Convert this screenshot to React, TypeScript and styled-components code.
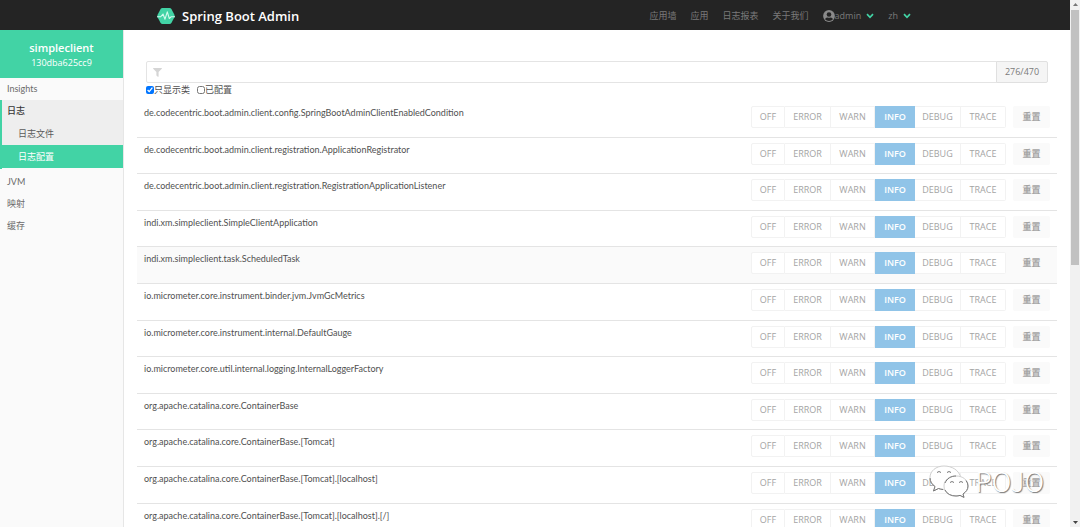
import React, { useState } from 'react';
import styled, { createGlobalStyle } from 'styled-components';

const GlobalStyle = createGlobalStyle`
  * { box-sizing: border-box; }
  html, body, #root { height: 100%; margin: 0; }
  body {
    overflow: hidden;
    background: #fff;
    color: #505050;
    font-family: Lato, "Noto Sans CJK SC", sans-serif;
    font-size: 9px;
    line-height: 14px;
  }
  a { color: inherit; text-decoration: none; }
  ul { list-style: none; margin: 0; padding: 0; }
  button, input { font: inherit; color: inherit; margin: 0; }
`;

const Shell = styled.div`
  display: flex;
  height: 100vh;
`;

const Page = styled.div`
  position: relative;
  flex: 1;
  min-width: 0;
  display: flex;
  flex-direction: column;
  overflow: hidden;
`;

const Header = styled.header`
  flex: none;
  height: 30px;
  background: #242424;
  font-family: "Open Sans", "Noto Sans CJK SC", sans-serif;
`;

const HeaderInner = styled.div`
  display: flex;
  align-items: center;
  justify-content: space-between;
  height: 100%;
  max-width: 756px;
  margin: 0 auto;
`;

const Brand = styled.a`
  display: flex;
  align-items: center;
  gap: 7px;
  padding-top: 2px;
  color: #fff;
  font-size: 13px;
  font-weight: 600;
`;

const Nav = styled.nav`
  display: flex;
  align-items: center;
  gap: 14px;
  padding: 2px 2px 0 0;
  color: #7a7a7a;
`;

const NavLink = styled.a`
  display: flex;
  align-items: center;
`;

const MenuButton = styled.button`
  display: flex;
  align-items: center;
  padding: 0;
  border: 0;
  background: none;
  svg:last-child { margin-left: 5px; }
`;

const Body = styled.div`
  flex: 1;
  display: flex;
  min-height: 0;
`;

const Sidebar = styled.aside`
  flex: none;
  width: 124px;
  background: #fafafa;
  border-right: 1px solid #e6e6e6;
`;

const Instance = styled.a`
  display: flex;
  flex-direction: column;
  align-items: center;
  height: 48px;
  padding-top: 10px;
  background: #42d3a5;
  color: #fff;
  font-family: "Open Sans", sans-serif;
  strong { font-size: 11px; font-weight: 600; line-height: 16px; }
`;

const SideLink = styled.a<{ $strong?: boolean }>`
  display: flex;
  align-items: center;
  height: 22px;
  padding-left: 7px;
  color: ${(p) => (p.$strong ? '#363636' : '#6a6a6a')};
  font-weight: ${(p) => (p.$strong ? 500 : 400)};
`;

const Group = styled.li`
  margin-bottom: 2px;
  padding-bottom: 1px;
  border-left: 2px solid #42d3a5;
  background: linear-gradient(#eee, #eee) no-repeat 0 0 / 100% 68px;
  ${SideLink} { padding-left: 5px; }
`;

const SubLink = styled.a<{ $active?: boolean }>`
  display: flex;
  align-items: center;
  height: 23px;
  padding-left: 16px;
  background: ${(p) => (p.$active ? '#42d3a5' : 'transparent')};
  color: ${(p) => (p.$active ? '#fff' : '#5a5a5a')};
`;

const Main = styled.main`
  flex: 1;
  min-width: 0;
  padding: 31px 13px 0;
`;

const Filters = styled.div`
  padding: 0 9px;
`;

const SearchRow = styled.div`
  display: flex;
  height: 22px;
`;

const SearchBox = styled.label`
  flex: 1;
  display: flex;
  align-items: center;
  padding-left: 6px;
  gap: 6px;
  border: 1px solid #e4e4e4;
  border-radius: 2px 0 0 2px;
  input { flex: 1; min-width: 0; border: 0; outline: 0; background: none; padding: 0; }
`;

const Count = styled.output`
  width: 52px;
  margin-left: -1px;
  border: 1px solid #e0e0e0;
  border-radius: 0 2px 2px 0;
  background: #f5f5f5;
  color: #7a7a7a;
  font-family: "Open Sans", sans-serif;
  line-height: 20px;
  text-align: center;
`;

const Checks = styled.div`
  display: flex;
  gap: 7px;
  height: 14px;
`;

const Check = styled.label`
  display: flex;
  align-items: center;
  input { width: 8px; height: 8px; }
`;

const LoggerTable = styled.table`
  width: 100%;
  margin-top: 4px;
  border-collapse: separate;
  border-spacing: 0;
`;

const Row = styled.tr<{ $hovered?: boolean }>`
  height: 37px;
  background: ${(p) => (p.$hovered ? '#fafafa' : '#fff')};
  &:nth-child(5n + 2), &:nth-child(5n + 4) { height: 36px; }
  th, td {
    padding: 5px 7px 0;
    border-bottom: 1px solid #e4e4e4;
    vertical-align: top;
    text-align: left;
    font-weight: 400;
  }
`;

const Controls = styled.div`
  display: flex;
  justify-content: flex-end;
  gap: 7px;
`;

const Levels = styled.div`
  display: flex;
`;

const Level = styled.button<{ $active?: boolean; $width: number }>`
  width: ${(p) => p.$width}px;
  height: 22px;
  padding: 0;
  border: 1px solid ${(p) => (p.$active ? '#90c4e8' : '#f2f2f2')};
  border-left-width: ${(p) => (p.$active ? 1 : 0)}px;
  background: ${(p) => (p.$active ? '#90c4e8' : '#fff')};
  color: ${(p) => (p.$active ? '#fff' : '#a4a4a4')};
  font-family: "Open Sans", sans-serif;
  font-weight: ${(p) => (p.$active ? 600 : 400)};
  &:first-child { border-left-width: 1px; border-radius: 2px 0 0 2px; }
  &:last-child { border-radius: 0 2px 2px 0; }
`;

const Reset = styled.button`
  width: 37px;
  height: 22px;
  padding: 0;
  border: 0;
  border-radius: 2px;
  background: #fafafa;
  color: #a4a4a4;
  font-weight: 700;
`;

const ScrollTrack = styled.div`
  flex: none;
  display: flex;
  flex-direction: column;
  align-items: center;
  justify-content: space-between;
  width: 10px;
  padding: 3px 1px;
  background: #f1f1f1;
`;

const ScrollThumb = styled.div`
  width: 100%;
  height: 49%;
  margin: 4px 0 auto;
  background: #c1c1c1;
`;

const Watermark = styled.div`
  position: absolute;
  right: 26px;
  bottom: 29px;
  display: flex;
  align-items: center;
  gap: 6px;
  color: #fff;
  font-family: "Noto Sans CJK SC", sans-serif;
  font-size: 27px;
  font-weight: 300;
  line-height: 34px;
  text-shadow: 1px 1px 1px #777;
  pointer-events: none;
`;

const Bubble = styled.path`
  fill: #fff;
  stroke: #d0d0d0;
  stroke-width: 1;
`;

const BubbleShade = styled.path`
  fill: none;
  stroke: #777;
  stroke-width: 1;
`;

const LEVELS: [string, number][] = [
  ['OFF', 34], ['ERROR', 46], ['WARN', 44], ['INFO', 40], ['DEBUG', 46], ['TRACE', 45],
];

const LOGGERS = [
  'de.codecentric.boot.admin.client.config.SpringBootAdminClientEnabledCondition',
  'de.codecentric.boot.admin.client.registration.ApplicationRegistrator',
  'de.codecentric.boot.admin.client.registration.RegistrationApplicationListener',
  'indi.xm.simpleclient.SimpleClientApplication',
  'indi.xm.simpleclient.task.ScheduledTask',
  'io.micrometer.core.instrument.binder.jvm.JvmGcMetrics',
  'io.micrometer.core.instrument.internal.DefaultGauge',
  'io.micrometer.core.util.internal.logging.InternalLoggerFactory',
  'org.apache.catalina.core.ContainerBase',
  'org.apache.catalina.core.ContainerBase.[Tomcat]',
  'org.apache.catalina.core.ContainerBase.[Tomcat].[localhost]',
  'org.apache.catalina.core.ContainerBase.[Tomcat].[localhost].[/]',
];

const Logo = () => (
  <svg width="18" height="16" viewBox="0 0 18 16" aria-hidden="true">
    <path d="M5.400 0h7.200q1.200 0 1.800 1l3 5.800q.6 1.200 0 2.400l-3 5.800q-.6 1-1.800 1H5.400q-1.200 0-1.800-1L.6 9.200Q0 8 .6 6.800L3.600 1Q4.200 0 5.400 0z" fill="#42d3a5" />
    <path d="M0 8.800h3.600L6 6 8 11.200 10.300 3.800 12.300 10.500 14 8.800h4" fill="none" stroke="#d4fbee" strokeWidth="1.100" strokeLinejoin="round" />
  </svg>
);

const Chevron = () => (
  <svg width="8" height="6" viewBox="0 0 8 6" aria-hidden="true">
    <path d="M1 1.200 4 4.300 7 1.200" fill="none" stroke="#42d3a5" strokeWidth="1.700" />
  </svg>
);

const UserIcon = () => (
  <svg width="12" height="12" viewBox="0 0 12 12" aria-hidden="true">
    <circle cx="6" cy="6" r="5.900" fill="#8a8a8a" />
    <circle cx="6" cy="4.500" r="2.300" fill="#242424" />
    <path d="M2 9.300q.6-1.900 2.200-1.900 1.800.7 3.600 0 1.600 0 2.200 1.900Q8.500 11 6 11T2 9.300z" fill="#242424" />
  </svg>
);

const FilterIcon = () => (
  <svg width="9" height="9" viewBox="0 0 9 9" aria-hidden="true">
    <path d="M.4 0h8.200q.6.300.2.800L5.600 4v4.500q-.3.600-.8.200L3.400 7.600V4L.2.800Q-.1.300.4 0z" fill="#d5d5d5" />
  </svg>
);

const WeChatIcon = () => (
  <svg width="42" height="34" viewBox="0 0 42 34" aria-hidden="true">
    <Bubble d="M17 2C9 2 3 7 3 13.500c0 4 2 7 5 9L6.500 27l5-2.500q3 1 6 1H34V14C32 6 25 2 17 2z" stroke="none" />
    <Bubble d="M29 12c-7 0-12 4-12 10s5 10 12 10q2 0 4-.6l4 2-1-3.400c3-2 5-4.500 5-8 0-6-5-10-12-10z" />
    <BubbleShade d="M3 14c0 3.500 2 6.500 5 8.500L6.500 27l5-2.500q2 .8 4.500 1M18 26c2 4 6 6 11 6q2 0 4-.6l4 2-1-3.400c3-2 5-4.500 5-8q0-3-2-5.500M18 19c2-4.500 6-7 11-7" />
    <BubbleShade d="M10 8.500q2-2 4 0M20 8.500q2-2 4 0M23 18.500q2-2 4 0M32 18.500q2-2 4 0" />
  </svg>
);

const ArrowUp = () => <svg width="5" height="3" viewBox="0 0 5 3" aria-hidden="true"><path d="M0 3 2.500 0 5 3z" fill="#777" /></svg>;
const ArrowDown = () => <svg width="5" height="3" viewBox="0 0 5 3" aria-hidden="true"><path d="M0 0 2.500 3 5 0z" fill="#444" /></svg>;

function LoggerRow({ name }: { name: string }) {
  const [level, setLevel] = useState('INFO');
  return (
    <Row $hovered={name === 'indi.xm.simpleclient.task.ScheduledTask'}>
      <th scope="row">{name}</th>
      <td>
        <Controls>
          <Levels role="group" aria-label={name}>
            {LEVELS.map(([l, w]) => (
              <Level key={l} type="button" $width={w} $active={l === level} onClick={() => setLevel(l)}>{l}</Level>
            ))}
          </Levels>
          <Reset type="button" onClick={() => setLevel('INFO')}>重置</Reset>
        </Controls>
      </td>
    </Row>
  );
}

export default function App() {
  return (
    <Shell>
      <GlobalStyle />
      <Page>
        <Header>
          <HeaderInner>
            <Brand href="#"><Logo />Spring Boot Admin</Brand>
            <Nav>
              <NavLink href="#wallboard">应用墙</NavLink>
              <NavLink href="#applications">应用</NavLink>
              <NavLink href="#journal">日志报表</NavLink>
              <NavLink href="#about">关于我们</NavLink>
              <MenuButton type="button"><UserIcon />admin<Chevron /></MenuButton>
              <MenuButton type="button">zh<Chevron /></MenuButton>
            </Nav>
          </HeaderInner>
        </Header>
        <Body>
          <Sidebar>
            <Instance href="#instance"><strong>simpleclient</strong><span>130dba625cc9</span></Instance>
            <ul>
              <li><SideLink href="#insights">Insights</SideLink></li>
              <Group>
                <SideLink href="#logging" $strong>日志</SideLink>
                <SubLink href="#logfile">日志文件</SubLink>
                <SubLink href="#loggers" $active>日志配置</SubLink>
              </Group>
              <li><SideLink href="#jvm">JVM</SideLink></li>
              <li><SideLink href="#mappings">映射</SideLink></li>
              <li><SideLink href="#caches">缓存</SideLink></li>
            </ul>
          </Sidebar>
          <Main>
            <Filters>
              <SearchRow>
                <SearchBox><FilterIcon /><input type="text" aria-label="过滤" /></SearchBox>
                <Count>276/470</Count>
              </SearchRow>
              <Checks>
                <Check><input type="checkbox" defaultChecked />只显示类</Check>
                <Check><input type="checkbox" />已配置</Check>
              </Checks>
            </Filters>
            <LoggerTable>
              <tbody>
                {LOGGERS.map((name) => <LoggerRow key={name} name={name} />)}
              </tbody>
            </LoggerTable>
          </Main>
        </Body>
        <Watermark><WeChatIcon />POJO</Watermark>
      </Page>
      <ScrollTrack aria-hidden="true"><ArrowUp /><ScrollThumb /><ArrowDown /></ScrollTrack>
    </Shell>
  );
}
